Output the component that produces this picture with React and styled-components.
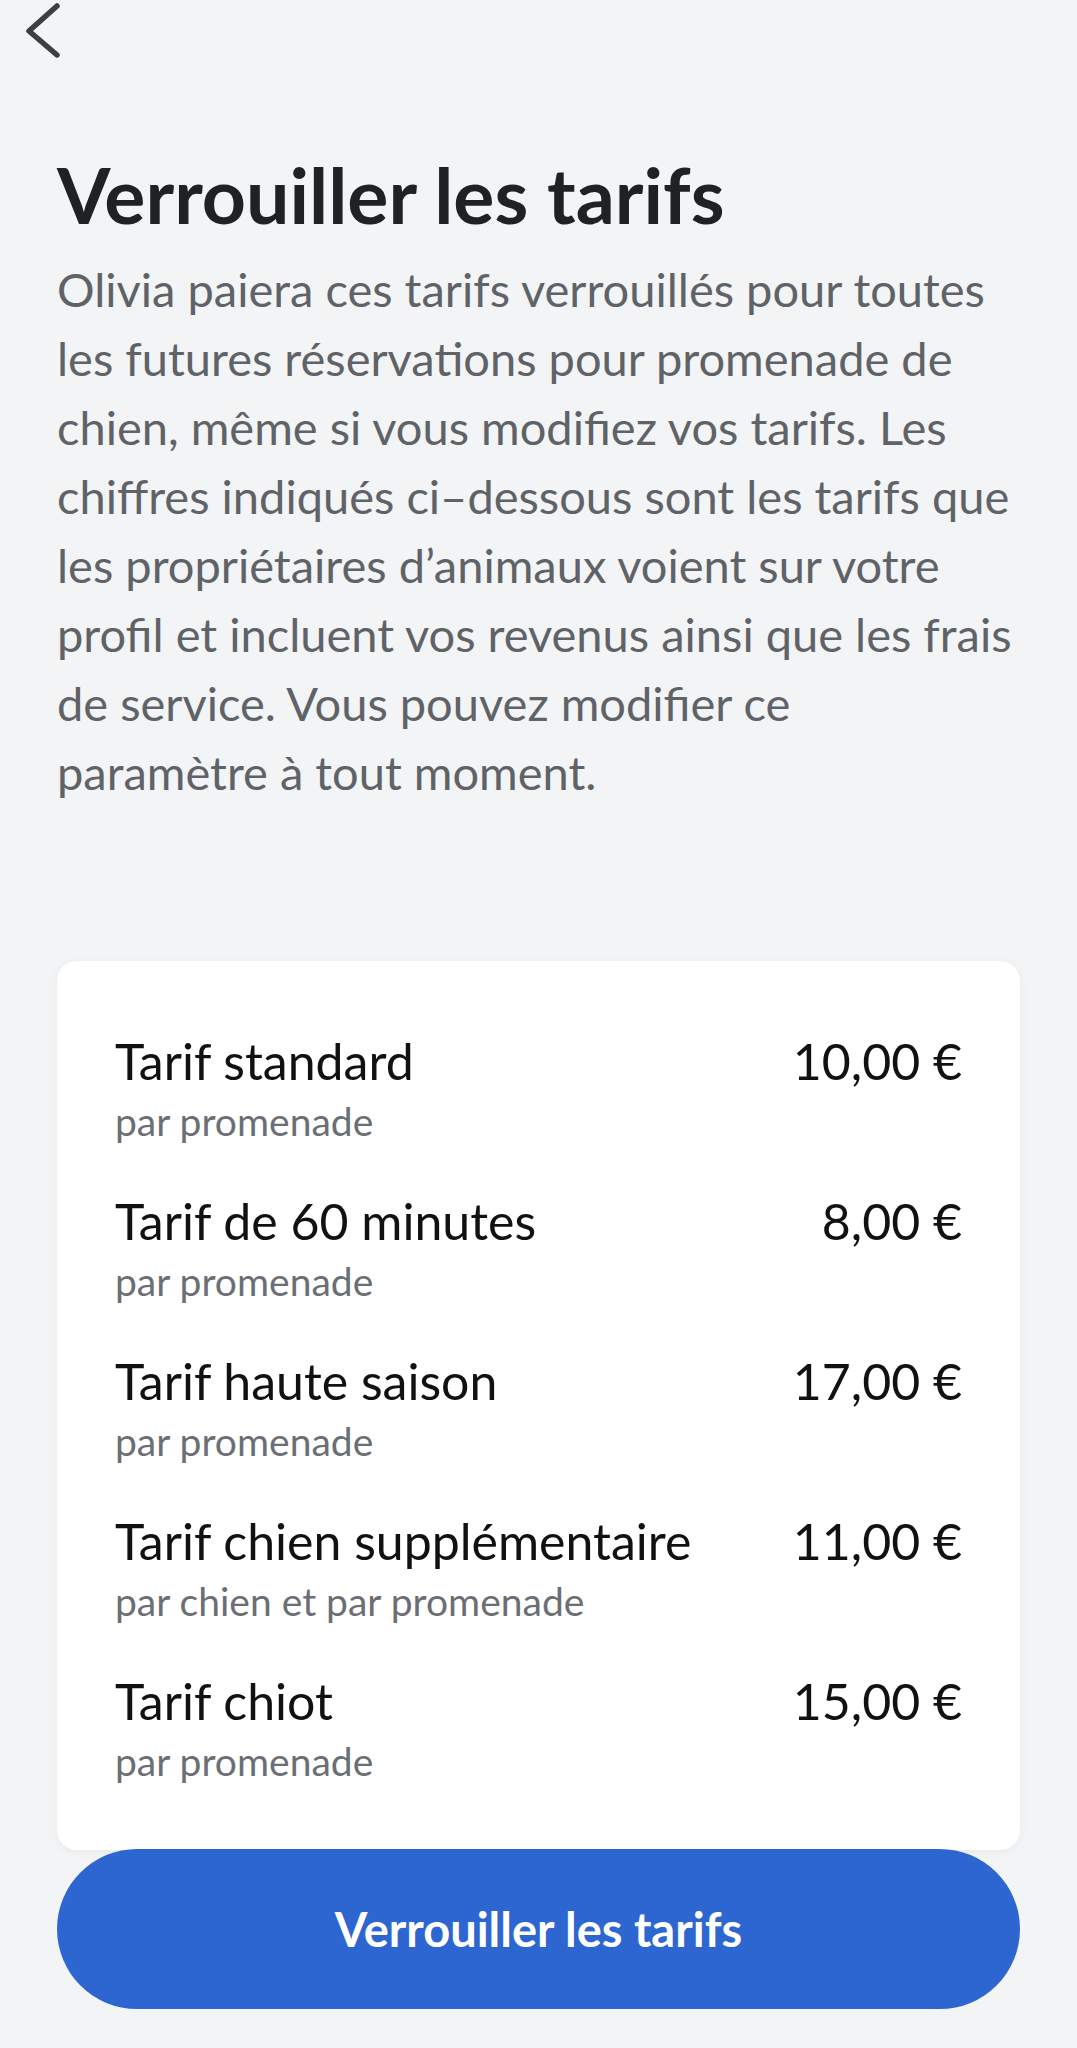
import React from "react"
import styled, { createGlobalStyle } from "styled-components"

const GlobalStyle = createGlobalStyle`
  html, body {
    margin: 0;
    padding: 0;
    background: #f3f4f6;
  }
  body {
    font-family: Lato, "Noto Sans", sans-serif;
    -webkit-font-smoothing: antialiased;
  }
`

const Page = styled.div`
  width: 1077px;
  min-height: 2048px;
  box-sizing: border-box;
  padding: 0 57px;
  display: flex;
  flex-direction: column;
`
const BackButton = styled.button`
  width: 40px;
  height: 60px;
  margin: 0 0 0 -32px;
  padding: 0;
  border: none;
  background: none;
  display: flex;
  align-items: flex-start;
  cursor: pointer;
`
const Title = styled.h1`
  margin: 90px 0 0;
  font-size: 77px;
  line-height: 88px;
  font-weight: 700;
  color: #202124;
`
const Intro = styled.p`
  margin: 17px 0 0;
  font-size: 47px;
  line-height: 69px;
  color: #5f6368;
`
const Line = styled.span`
  display: block;
  white-space: nowrap;
`
const Card = styled.div`
  margin-top: 154px;
  background: #fff;
  border-radius: 20px;
  padding: 70px 58px 65px;
  display: flex;
  flex-direction: column;
  gap: 46px;
  box-shadow: 0 2px 10px rgba(0, 0, 0, 0.05);
`
const Row = styled.div`
  display: flex;
  justify-content: space-between;
  align-items: flex-start;
`
const RowText = styled.div`
  display: flex;
  flex-direction: column;
  gap: 6px;
`
const RowTitle = styled.div`
  font-size: 50px;
  line-height: 60px;
  color: #111;
`
const RowSub = styled.div`
  font-size: 39px;
  line-height: 48px;
  color: #6b6f75;
`
const Price = styled.div`
  font-size: 50px;
  line-height: 60px;
  color: #111;
  white-space: nowrap;
`
const LockButton = styled.button`
  margin-top: -1px;
  height: 160px;
  border: none;
  border-radius: 80px;
  background: #2e66d1;
  color: #fff;
  font-family: Lato, "Noto Sans", sans-serif;
  font-size: 47px;
  font-weight: 700;
  cursor: pointer;
`

const rates = [
  { label: "Tarif standard", unit: "par promenade", price: "10,00 €" },
  { label: "Tarif de 60 minutes", unit: "par promenade", price: "8,00 €" },
  { label: "Tarif haute saison", unit: "par promenade", price: "17,00 €" },
  { label: "Tarif chien supplémentaire", unit: "par chien et par promenade", price: "11,00 €" },
  { label: "Tarif chiot", unit: "par promenade", price: "15,00 €" },
]

const intro = [
  "Olivia paiera ces tarifs verrouillés pour toutes",
  "les futures réservations pour promenade de",
  "chien, même si vous modifiez vos tarifs. Les",
  "chiffres indiqués ci–dessous sont les tarifs que",
  "les propriétaires d’animaux voient sur votre",
  "profil et incluent vos revenus ainsi que les frais",
  "de service. Vous pouvez modifier ce",
  "paramètre à tout moment.",
]

const App = () => {
  return (
    <Page>
      <GlobalStyle />
      <BackButton aria-label="Retour">
        <svg width="40" height="60" viewBox="0 0 40 60">
          <polyline
            points="32,6 4,31 32,55"
            fill="none"
            stroke="#3c4043"
            strokeWidth="5.5"
            strokeLinecap="round"
            strokeLinejoin="round"
          />
        </svg>
      </BackButton>
      <Title>Verrouiller les tarifs</Title>
      <Intro>
        {intro.map(line => (
          <Line key={line}>{line}</Line>
        ))}
      </Intro>
      <Card>
        {rates.map(rate => (
          <Row key={rate.label}>
            <RowText>
              <RowTitle>{rate.label}</RowTitle>
              <RowSub>{rate.unit}</RowSub>
            </RowText>
            <Price>{rate.price}</Price>
          </Row>
        ))}
      </Card>
      <LockButton>Verrouiller les tarifs</LockButton>
    </Page>
  )
}

export default App
